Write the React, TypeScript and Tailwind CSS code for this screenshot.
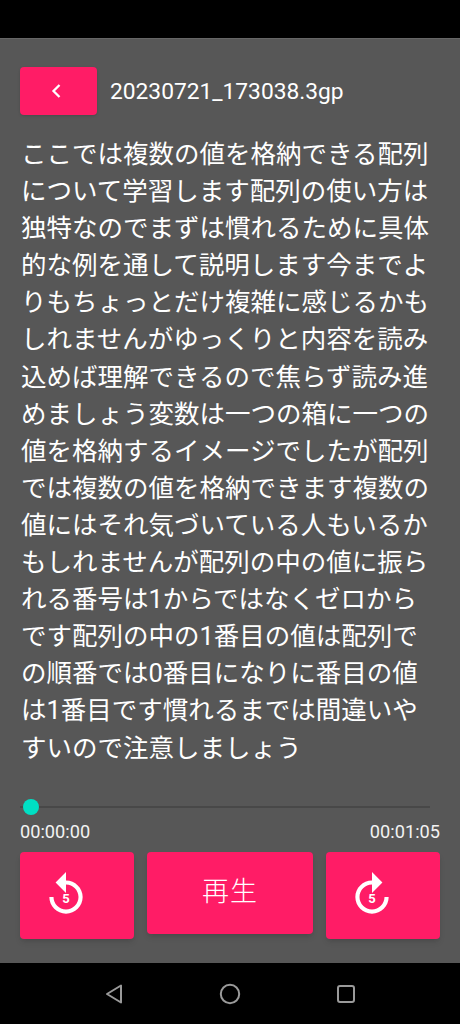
const lines = [
  "ここでは複数の値を格納できる配列",
  "について学習します配列の使い方は",
  "独特なのでまずは慣れるために具体",
  "的な例を通して説明します今までよ",
  "りもちょっとだけ複雑に感じるかも",
  "しれませんがゆっくりと内容を読み",
  "込めば理解できるので焦らず読み進",
  "めましょう変数は一つの箱に一つの",
  "値を格納するイメージでしたが配列",
  "では複数の値を格納できます複数の",
  "値にはそれ気づいている人もいるか",
  "もしれませんが配列の中の値に振ら",
  "れる番号は1からではなくゼロから",
  "です配列の中の1番目の値は配列で",
  "の順番では0番目になりに番目の値",
  "は1番目です慣れるまでは間違いや",
  "すいので注意しましょう",
];

const font = { fontFamily: "Roboto, 'Noto Sans CJK JP', sans-serif" };

function SkipIcon({ forward }: { forward?: boolean }) {
  return (
    <div className="relative w-[50px] h-[50px]">
      <svg viewBox="0 0 24 24" className="w-[50px] h-[50px]" fill="#fff">
        {forward ? (
          <path d="M12 5V1l5 5-5 5V7c-3.31 0-6 2.69-6 6s2.69 6 6 6 6-2.69 6-6h2c0 4.42-3.58 8-8 8s-8-3.58-8-8 3.58-8 8-8z" />
        ) : (
          <path d="M12 5V1L7 6l5 5V7c3.31 0 6 2.69 6 6s-2.69 6-6 6-6-2.69-6-6H4c0 4.42 3.58 8 8 8s8-3.58 8-8-3.58-8-8-8z" />
        )}
      </svg>
      <span className="absolute left-0 right-0 top-[21px] text-center text-[13px] leading-[16px] font-bold text-white">5</span>
    </div>
  );
}

export default function App() {
  return (
    <div className="w-[460px] h-[1024px] flex flex-col bg-black text-white overflow-hidden" style={font}>
      <div className="h-[38px] shrink-0 bg-black" />
      <main className="flex-1 flex flex-col bg-[#575757] border-t border-[#666666] px-[20px]">
        <header className="flex items-center gap-[13px] mt-[28px]">
          <button className="w-[77px] h-[48px] rounded-[4px] bg-[#ff1c66] flex items-center justify-center shadow-sm">
            <svg viewBox="0 0 24 24" className="w-[24px] h-[24px] -ml-[5px]" fill="none" stroke="#fff" strokeWidth="2.3">
              <path d="M15.5 6l-6 6 6 6" />
            </svg>
          </button>
          <div className="text-[22.75px] leading-[28px] pt-[2px]">20230721_173038.3gp</div>
        </header>
        <section className="mt-[21px] pl-[1px] text-[25.5px] leading-[37.1px] text-white whitespace-nowrap">
          {lines.map((l) => (
            <div key={l}>{l}</div>
          ))}
        </section>
        <div className="mt-[32px] flex items-center h-[16px]">
          <div className="relative flex-1 mr-[10px] h-[2px] bg-[#484848]">
            <div className="absolute left-[3px] -top-[7px] w-[16px] h-[16px] rounded-full bg-[#00dfc4]" />
          </div>
        </div>
        <div className="flex justify-between text-[18.2px] leading-[20px] mt-[7px] text-[#f2f2f2]">
          <span>00:00:00</span>
          <span>00:01:05</span>
        </div>
        <div className="flex items-start gap-[13px] mt-[10px]">
          <button className="w-[114px] h-[87px] rounded-[4px] bg-[#ff1c66] flex items-center pl-[21px] shadow-md">
            <SkipIcon />
          </button>
          <button className="w-[166px] h-[82px] rounded-[4px] bg-[#ff1c66] flex items-center justify-center text-[27px] tracking-[1px] font-light shadow-md">
            再生
          </button>
          <button className="w-[114px] h-[87px] rounded-[4px] bg-[#ff1c66] flex items-center pl-[21px] shadow-md">
            <SkipIcon forward />
          </button>
        </div>
      </main>
      <nav className="h-[61px] shrink-0 bg-black flex items-center justify-center gap-[95px]">
        <svg viewBox="0 0 20 22" className="w-[20px] h-[22px]" fill="none" stroke="#9a9a9a" strokeWidth="2" strokeLinejoin="round">
          <path d="M17 2.5v17L3 11z" />
        </svg>
        <svg viewBox="0 0 22 22" className="w-[22px] h-[22px]" fill="none" stroke="#9a9a9a" strokeWidth="2">
          <circle cx="11" cy="11" r="9.2" />
        </svg>
        <svg viewBox="0 0 20 20" className="w-[20px] h-[20px]" fill="none" stroke="#9a9a9a" strokeWidth="2">
          <rect x="2" y="2" width="16" height="16" rx="2" />
        </svg>
      </nav>
    </div>
  );
}
